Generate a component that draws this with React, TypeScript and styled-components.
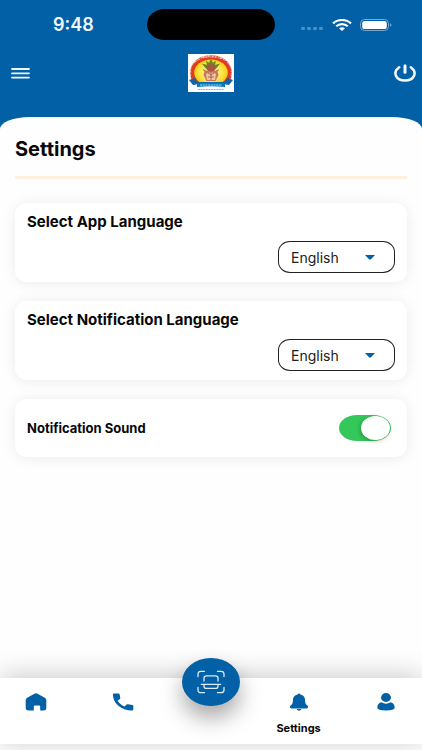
import React, { useState } from "react";
import styled, { createGlobalStyle } from "styled-components";

const blue = "#0160a6";

const GlobalStyle = createGlobalStyle`
  * { box-sizing: border-box; }
  body { margin: 0; background: #fefefe; font-family: Inter, "Liberation Sans", sans-serif; color: #080808; }
  button, select { font: inherit; color: inherit; }
`;

const Page = styled.div`
  display: flex;
  flex-direction: column;
  min-height: 100vh;
  background: ${blue};
`;

const StatusBar = styled.div`
  display: grid;
  grid-template-columns: 1fr 128px 1fr;
  align-items: center;
  padding-top: 9px;
  height: 40px;
`;

const Time = styled.time`
  justify-self: center;
  color: #f2f8fd;
  font-size: 18px;
  font-weight: 600;
  line-height: 20px;
`;

const Island = styled.div`
  height: 31px;
  border-radius: 18px / 16px;
  background: #000;
`;

const StatusIcons = styled.div`
  display: flex;
  align-items: center;
  justify-content: flex-end;
  gap: 8px;
  padding-right: 30px;
`;

const Header = styled.header`
  display: grid;
  grid-template-columns: 1fr auto 1fr;
  align-items: center;
  height: 77px;
  padding: 0 6px 12px;
`;

const IconButton = styled.button<{ $end?: boolean }>`
  display: flex;
  padding: ${(p) => (p.$end ? "0" : "0 4px")};
  border: 0;
  background: none;
  justify-self: ${(p) => (p.$end ? "end" : "start")};
  cursor: pointer;
`;

const Sheet = styled.main`
  flex: 1;
  padding: 19px 15px;
  background: #fefefe;
  border-radius: 30px 30px 0 0 / 12px 12px 0 0;
`;

const Title = styled.h1`
  margin: 0;
  padding-bottom: 14px;
  border-bottom: 3px solid #fdf0dc;
  font-size: 20px;
  font-weight: 700;
  line-height: 26px;
`;

const Cards = styled.div`
  display: flex;
  flex-direction: column;
  gap: 19px;
  padding-top: 24px;
`;

const Card = styled.section<{ $row?: boolean }>`
  display: flex;
  flex-direction: ${(p) => (p.$row ? "row" : "column")};
  align-items: ${(p) => (p.$row ? "center" : "stretch")};
  justify-content: space-between;
  padding: ${(p) => (p.$row ? "16px 16px 16px 12px" : "9px 12px")};
  border-radius: 12px / 11px;
  background: #fff;
  box-shadow: 0 1px 14px rgba(0, 0, 0, 0.08);
`;

const Label = styled.label<{ $small?: boolean }>`
  font-size: ${(p) => (p.$small ? 13 : 15)}px;
  font-weight: 700;
  line-height: 20px;
`;

const SelectBox = styled.div`
  position: relative;
  align-self: flex-end;
  width: 117px;
  margin-top: 9px;
`;

const Select = styled.select`
  appearance: none;
  display: block;
  width: 100%;
  height: 32px;
  padding: 0 36px 0 12px;
  border: 1px solid #222;
  border-radius: 12px / 11px;
  background: #fff;
  color: #202020;
  font-size: 14px;
`;

const Caret = styled.svg`
  position: absolute;
  right: 20px;
  top: 14px;
  pointer-events: none;
`;

const Switch = styled.input`
  appearance: none;
  display: flex;
  align-items: center;
  width: 52px;
  height: 26px;
  margin: 0;
  padding: 1px;
  border-radius: 18px / 13px;
  background: #c9c9c9;
  cursor: pointer;

  &::before {
    content: "";
    width: 29px;
    height: 24px;
    border-radius: 50%;
    background: #fff;
    box-shadow: -1px 1px 4px rgba(0, 0, 0, 0.25);
  }
  &:checked {
    justify-content: flex-end;
    background: #34c759;
  }
`;

const Footer = styled.footer`
  padding-bottom: 6px;
  background: #fcfcfc;
`;

const Nav = styled.nav`
  background: #fff;
  box-shadow: 0 -3px 26px rgba(0, 0, 0, 0.2);
`;

const NavItems = styled.div`
  display: grid;
  grid-template-columns: repeat(5, 1fr);
  height: 66px;
  margin: 0 -8px;
`;

const NavItem = styled.a`
  display: flex;
  flex-direction: column;
  align-items: center;
  gap: 9px;
  padding-top: 14px;
  color: #080808;
  font-size: 11px;
  font-weight: 700;
  line-height: 14px;
  text-decoration: none;
`;

const ScanButton = styled.button`
  display: flex;
  align-items: center;
  justify-content: center;
  justify-self: center;
  width: 58px;
  height: 48px;
  margin-top: -20px;
  padding: 0;
  border: 0;
  border-radius: 50%;
  background: ${blue};
  box-shadow: 0 12px 22px rgba(0, 0, 0, 0.34);
  cursor: pointer;
`;

const Signal = () => (
  <svg width="23" height="12" fill="#4b90c5" aria-hidden="true">
    {[0, 6, 12, 18].map((x) => (
      <rect key={x} x={x} y="8" width="4" height="3" rx="1.2" />
    ))}
  </svg>
);

const Wifi = () => (
  <svg width="20" height="12" viewBox="0 0 20 12" fill="none" stroke="#fff" strokeWidth="2.2" aria-hidden="true">
    <path d="M1 4.4C6-.2 14-.2 19 4.4" />
    <path d="M4.2 7.3c3.3-3 8.3-3 11.6 0" />
    <path d="M7 9.3c1.7-1.4 4.3-1.4 6 0L10 12Z" fill="#fff" stroke="none" />
  </svg>
);

const Battery = () => (
  <svg width="32" height="12" viewBox="0 0 32 12" aria-hidden="true">
    <rect x=".5" y=".5" width="28" height="11" rx="4" fill="none" stroke="#75a9d2" />
    <rect x="2.2" y="2" width="24.6" height="8" rx="2.6" fill="#fff" />
    <path d="M30 4.2c2 .6 2 3 0 3.6Z" fill="#75a9d2" />
  </svg>
);

const BankLogo = () => (
  <svg width="46" height="38" viewBox="0 0 46 38" role="img" aria-label="Bank logo">
    <defs>
      <path id="bankArc" d="M4.3 26C-1 11 9 3.4 23 3.4S47 11 41.7 26" />
      <radialGradient id="sun">
        <stop offset="0" stopColor="#fffbd0" />
        <stop offset=".65" stopColor="#fbe64b" />
        <stop offset="1" stopColor="#f5cd16" />
      </radialGradient>
    </defs>
    <rect width="46" height="38" fill="#fbfdff" />
    <path d="M5 29C-3 13 7 1.2 23 1.2S49 13 41 29Z" fill="#df3b22" />
    <ellipse cx="23" cy="18.5" rx="16.8" ry="13" fill="url(#sun)" />
    <text fill="#fff" fontFamily="Liberation Sans, sans-serif" fontSize="3" fontWeight="700">
      <textPath href="#bankArc" startOffset="50%" textAnchor="middle">THE ERANDOL PEOPLE'S CO-OP BANK LTD</textPath>
    </text>
    <path d="m23 4.7 2 4 3-2-1 4 5-1-4 5H18l-4-5 5 1-1-4 3 2Z" fill="#6b8424" />
    <ellipse cx="23" cy="14" rx="4.6" ry="3.8" fill="#a95540" />
    <path d="M14.5 15c3 1 4 2 8.5 2s6-1 8.500-2l-2 3 1 3-3 6h-9l-3-6 1-3Z" fill="#c77859" />
    <path d="M18 20c3-2 7-2 10 0l-1 6h-8Z" fill="#edc7a0" />
    <path d="m20 19 3 2 3-2M20 23h6M23 17v9" fill="none" stroke="#a33e3e" strokeWidth=".7" />
    <path d="m1 26 6-2 2 4h28l2-4 6 2-4 5c-11-2-25-2-36 0Z" fill="#1264a4" />
    <path d="M9 29c9-1 19-1 28 0v4c-9-1-19-1-28 0Z" fill="#0878be" />
    <path d="M12 31h22" stroke="#d8efff" strokeWidth=".8" strokeDasharray="2 .7" />
    <path d="M10 35.500h26" stroke="#b9a3b4" strokeWidth="1" strokeDasharray="2 .6" />
  </svg>
);

const navSvg = { width: 22, height: 20, viewBox: "0 0 22 20", fill: blue, "aria-hidden": true };

const HomeIcon = () => (
  <svg {...navSvg}>
    <path d="M9.4 1.8q1.6-.9 3.2 0l7.2 4q1.5.8 1.5 2.3v8q0 2.5-3 2.5h-3.1v-4.1q0-1-1.2-1h-4q-1.2 0-1.2 1v4.1H3.7q-3 0-3-2.5v-8q0-1.5 1.5-2.3Z" />
  </svg>
);

const PhoneIcon = () => (
  <svg {...navSvg}>
    <path d="M2 1.5h4.4q1 0 1.2.8L8.3 6q.1.7-.4 1.1L5.6 8.7c1.5 2.7 3.8 4.4 7 5.7l2-1.9q.5-.4 1.2-.3l4.5.7q1 .2 1 1v3.5q0 1.1-1.2 1.1C9.3 18.2.9 11.2.9 2.4q0-.9 1.1-.9Z" />
  </svg>
);

const BellIcon = () => (
  <svg {...navSvg}>
    <path d="M11 1.4q1.2 0 1.3 1.2c3.3.6 4.8 2.8 4.8 5.6 0 3.3.8 4.3 2.3 5.4q1 1 .7 2-.3.8-1.5.8H3.4q-1.2 0-1.5-.8-.3-1 .7-2C4.1 12.5 4.9 11.5 4.9 8.2c0-2.8 1.5-5 4.8-5.6Q9.8 1.4 11 1.4ZM8.6 17h4.8q-.7 1.8-2.4 1.8T8.6 17Z" />
  </svg>
);

const UserIcon = () => (
  <svg {...navSvg}>
    <ellipse cx="11" cy="5.5" rx="5" ry="4.4" />
    <path d="M6.2 10.3q4.8 2.7 9.6 0c2.500.9 3.9 2.8 3.9 5.3q0 3-8.7 3t-8.7-3c0-2.5 1.4-4.4 3.9-5.3Z" />
  </svg>
);

const ScanIcon = () => (
  <svg width="28" height="24" viewBox="0 0 28 24" fill="none" stroke="#d9ecfa" strokeWidth="1.3" strokeLinecap="round" strokeLinejoin="round" aria-hidden="true">
    <path d="M1 6.5V4q0-2.7 3-2.7h3.5M20.5 1.3H24q3 0 3 2.7v2.5M27 17.5V20q0 2.7-3 2.7h-3.5M7.5 22.7H4q-3 0-3-2.7v-2.5" />
    <path d="M7 11V8q0-2.2 2.6-2.2h8.8Q21 5.8 21 8v3M4.300 14.3h19.4M7 14.5v1.7q0 2.2 2.6 2.2h8.8q2.6 0 2.6-2.2v-1.7" />
  </svg>
);

interface LanguageCardProps {
  id: string;
  label: string;
}

function LanguageCard({ id, label }: LanguageCardProps) {
  return (
    <Card>
      <Label htmlFor={id}>{label}</Label>
      <SelectBox>
        <Select id={id} defaultValue="English">
          <option>English</option>
        </Select>
        <Caret width="10" height="5" viewBox="0 0 10 5" aria-hidden="true">
          <path d="M0 0h10L6 4.2q-1 .8-2 0Z" fill={blue} />
        </Caret>
      </SelectBox>
    </Card>
  );
}

export default function App() {
  const [sound, setSound] = useState(true);
  return (
    <>
      <GlobalStyle />
      <Page>
        <StatusBar>
          <Time>9:48</Time>
          <Island />
          <StatusIcons>
            <Signal />
            <Wifi />
            <Battery />
          </StatusIcons>
        </StatusBar>
        <Header>
          <IconButton aria-label="Menu">
            <svg width="20" height="14" stroke="#eef7fd" strokeWidth="1.8" strokeLinecap="round">
              <path d="M2 3h17M2 7.3h17M2 11.6h17" />
            </svg>
          </IconButton>
          <BankLogo />
          <IconButton $end aria-label="Log out">
            <svg width="22" height="18" viewBox="0 0 22 18" fill="none" stroke="#f3f9fd" strokeWidth="2.5" strokeLinecap="round">
              <path d="M5.2 3.2C-2 8.5 2 16.6 11 16.6S24 8.5 16.8 3.2" />
              <path d="M11 1.7v6.5" strokeWidth="3" />
            </svg>
          </IconButton>
        </Header>
        <Sheet>
          <Title>Settings</Title>
          <Cards>
            <LanguageCard id="app-language" label="Select App Language" />
            <LanguageCard id="notification-language" label="Select Notification Language" />
            <Card $row>
              <Label htmlFor="sound" $small>Notification Sound</Label>
              <Switch
                id="sound"
                type="checkbox"
                role="switch"
                checked={sound}
                onChange={(e) => setSound(e.target.checked)}
              />
            </Card>
          </Cards>
        </Sheet>
        <Footer>
          <Nav>
            <NavItems>
              <NavItem href="#home" aria-label="Home"><HomeIcon /></NavItem>
              <NavItem href="#call" aria-label="Call"><PhoneIcon /></NavItem>
              <ScanButton aria-label="Scan"><ScanIcon /></ScanButton>
              <NavItem href="#settings"><BellIcon />Settings</NavItem>
              <NavItem href="#profile" aria-label="Profile"><UserIcon /></NavItem>
            </NavItems>
          </Nav>
        </Footer>
      </Page>
    </>
  );
}
